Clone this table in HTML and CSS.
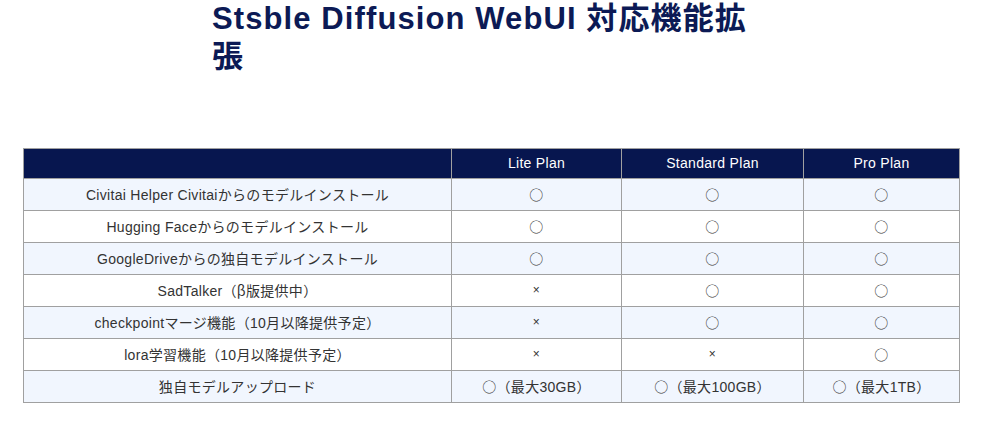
FILE: index.html
```html
<!DOCTYPE html>
<html lang="ja">
<head>
<meta charset="utf-8">
<link rel="stylesheet" href="styles.css">
</head>
<body>
<div class="page">
  <h2 class="title">Stsble Diffusion WebUI 対応機能拡張</h2>
  <table class="plans">
    <colgroup>
      <col class="c-feature">
      <col class="c-lite">
      <col class="c-std">
      <col class="c-pro">
    </colgroup>
    <thead>
      <tr><th></th><th>Lite Plan</th><th>Standard Plan</th><th>Pro Plan</th></tr>
    </thead>
    <tbody>
      <tr><td>Civitai Helper Civitaiからのモデルインストール</td><td class="o">○</td><td class="o">○</td><td class="o">○</td></tr>
      <tr><td>Hugging Faceからのモデルインストール</td><td class="o">○</td><td class="o">○</td><td class="o">○</td></tr>
      <tr><td>GoogleDriveからの独自モデルインストール</td><td class="o">○</td><td class="o">○</td><td class="o">○</td></tr>
      <tr><td>SadTalker（<span class="cjk">β</span>版提供中）</td><td class="x">×</td><td class="o">○</td><td class="o">○</td></tr>
      <tr><td>checkpointマージ機能（10月以降提供予定）</td><td class="x">×</td><td class="o">○</td><td class="o">○</td></tr>
      <tr><td>lora学習機能（10月以降提供予定）</td><td class="x">×</td><td class="x">×</td><td class="o">○</td></tr>
      <tr><td>独自モデルアップロード</td><td><span class="cjk">○</span>（最大30GB）</td><td><span class="cjk">○</span>（最大100GB）</td><td><span class="cjk">○</span>（最大1TB）</td></tr>
    </tbody>
  </table>
</div>
</body>
</html>
```

FILE: styles.css
```css
html, body {
  margin: 0;
  padding: 0;
  background: #ffffff;
}

.page {
  padding: 0 0 0 23px;
  font-family: "Liberation Sans", "Noto Sans CJK JP", sans-serif;
}

.title {
  margin: 0 0 72px 189px;
  width: 560px;
  font-size: 31px;
  line-height: 38px;
  font-weight: bold;
  color: #0c1a55;
  letter-spacing: 1.1px;
}

.plans {
  border-collapse: collapse;
  table-layout: fixed;
  width: 936px;
  font-size: 14px;
  color: #333333;
  letter-spacing: 0.3px;
}

.c-feature { width: 428px; }
.c-lite { width: 170px; }
.c-std { width: 182px; }
.c-pro { width: 156px; }

.plans th,
.plans td {
  border: 1px solid #a0a0a0;
  text-align: center;
  vertical-align: middle;
  padding: 0 0 2px;
  font-weight: normal;
}

.plans th {
  height: 27px;
  background: #07164f;
  color: #ffffff;
}

.plans td {
  height: 29px;
}

.plans tbody tr:nth-child(odd) td {
  background: #f1f6fe;
}

.plans td.x {
  font-size: 12px;
}

.plans td.o,
.cjk {
  font-family: "Noto Sans CJK JP", sans-serif;
}
```
